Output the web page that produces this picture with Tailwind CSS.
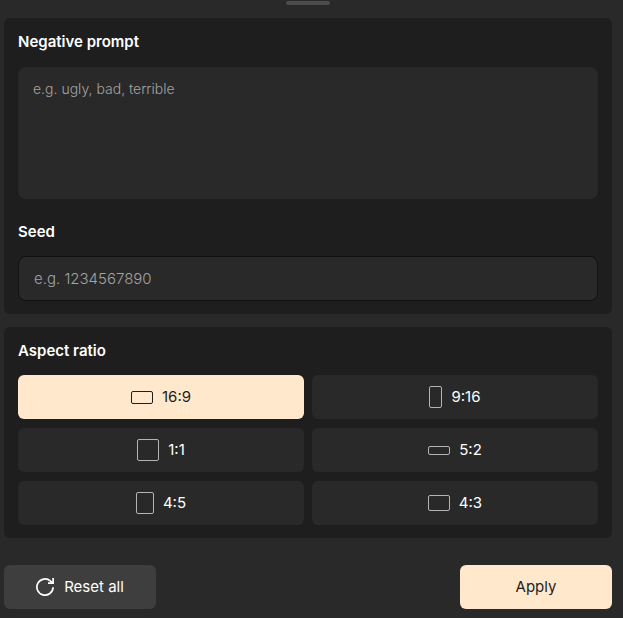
<!doctype html>
<html lang="en">
<head>
  <meta charset="UTF-8">
  <meta name="viewport" content="width=device-width, initial-scale=1.0">
  <title>Image settings</title>
  <script src="https://cdn.jsdelivr.net/npm/@tailwindcss/browser@4"></script>
</head>
<body class="min-h-screen bg-[#292929] pt-px pb-2 pl-1 pr-[11px] font-['Inter',sans-serif] text-[15px] leading-6 text-white">
  <!-- drag handle -->
  <div class="mx-auto h-1 w-11 rounded-full bg-[#4c4c4c]"></div>

  <form>
    <section id="prompt-settings" class="mt-[13px] flex flex-col rounded-md bg-[#1e1e1e] px-3.5 pt-3 pb-[13px]">
      <label for="negative-prompt" class="font-semibold">Negative prompt</label>
      <textarea
        id="negative-prompt"
        placeholder="e.g. ugly, bad, terrible"
        class="mt-[13px] h-[132px] w-full resize-none rounded-lg bg-[#292929] px-[15px] py-2.5 text-[14px] font-light outline-none placeholder:text-[#a3a3a3]"
      ></textarea>

      <label for="seed" class="mt-[21px] font-semibold">Seed</label>
      <input
        id="seed"
        type="text"
        inputmode="numeric"
        placeholder="e.g. 1234567890"
        class="mt-3 h-[45px] w-full rounded-lg border border-[#111111] bg-[#292929] px-[15px] font-light outline-none placeholder:text-[#a3a3a3]"
      />
    </section>

    <section id="aspect-settings" class="mt-[13px] rounded-md bg-[#1e1e1e] px-3.5 pt-3 pb-[13px]">
      <h2 class="font-semibold">Aspect ratio</h2>
      <div class="mt-3 grid grid-cols-2 gap-x-2 gap-y-[9px]" role="radiogroup" aria-label="Aspect ratio">
        <label class="flex h-11 cursor-pointer items-center justify-center gap-[9px] rounded-md bg-[#292929] has-checked:bg-[#ffe8cc] has-checked:text-[#1e1e1e]">
          <input type="radio" name="ratio" value="16:9" class="peer sr-only" checked />
          <span class="h-[13px] w-[22px] rounded-xs border border-[#b4b4b4] peer-checked:border-[#1e1e1e]"></span>
          16:9
        </label>
        <label class="flex h-11 cursor-pointer items-center justify-center gap-[9px] rounded-md bg-[#292929] has-checked:bg-[#ffe8cc] has-checked:text-[#1e1e1e]">
          <input type="radio" name="ratio" value="9:16" class="peer sr-only" />
          <span class="h-[22px] w-[13px] rounded-xs border border-[#b4b4b4] peer-checked:border-[#1e1e1e]"></span>
          9:16
        </label>
        <label class="flex h-11 cursor-pointer items-center justify-center gap-[9px] rounded-md bg-[#292929] has-checked:bg-[#ffe8cc] has-checked:text-[#1e1e1e]">
          <input type="radio" name="ratio" value="1:1" class="peer sr-only" />
          <span class="size-[22px] rounded-xs border border-[#b4b4b4] peer-checked:border-[#1e1e1e]"></span>
          1:1
        </label>
        <label class="flex h-11 cursor-pointer items-center justify-center gap-[9px] rounded-md bg-[#292929] has-checked:bg-[#ffe8cc] has-checked:text-[#1e1e1e]">
          <input type="radio" name="ratio" value="5:2" class="peer sr-only" />
          <span class="h-[9px] w-[22px] rounded-xs border border-[#b4b4b4] peer-checked:border-[#1e1e1e]"></span>
          5:2
        </label>
        <label class="flex h-11 cursor-pointer items-center justify-center gap-[9px] rounded-md bg-[#292929] has-checked:bg-[#ffe8cc] has-checked:text-[#1e1e1e]">
          <input type="radio" name="ratio" value="4:5" class="peer sr-only" />
          <span class="h-[22px] w-[18px] rounded-xs border border-[#b4b4b4] peer-checked:border-[#1e1e1e]"></span>
          4:5
        </label>
        <label class="flex h-11 cursor-pointer items-center justify-center gap-[9px] rounded-md bg-[#292929] has-checked:bg-[#ffe8cc] has-checked:text-[#1e1e1e]">
          <input type="radio" name="ratio" value="4:3" class="peer sr-only" />
          <span class="h-4 w-[22px] rounded-xs border border-[#b4b4b4] peer-checked:border-[#1e1e1e]"></span>
          4:3
        </label>
      </div>
    </section>

    <div class="mt-[27px] flex justify-between">
      <button type="reset" class="flex h-11 w-[152px] cursor-pointer items-center justify-center gap-2.5 rounded-md bg-[#3e3e3e]">
        <svg class="size-[18px]" viewBox="0 0 18 18" fill="none" stroke="currentColor" stroke-width="1.7" aria-hidden="true">
          <path d="M17.1 9.2A8.1 8.1 0 1 1 14.5 3.1L16.8 5" />
          <path d="M17.1 0V5.1H12" />
        </svg>
        Reset all
      </button>
      <button type="submit" class="h-11 w-[152px] cursor-pointer rounded-md bg-[#ffe8cc] text-[#1e1e1e]">Apply</button>
    </div>
  </form>
</body>
</html>
